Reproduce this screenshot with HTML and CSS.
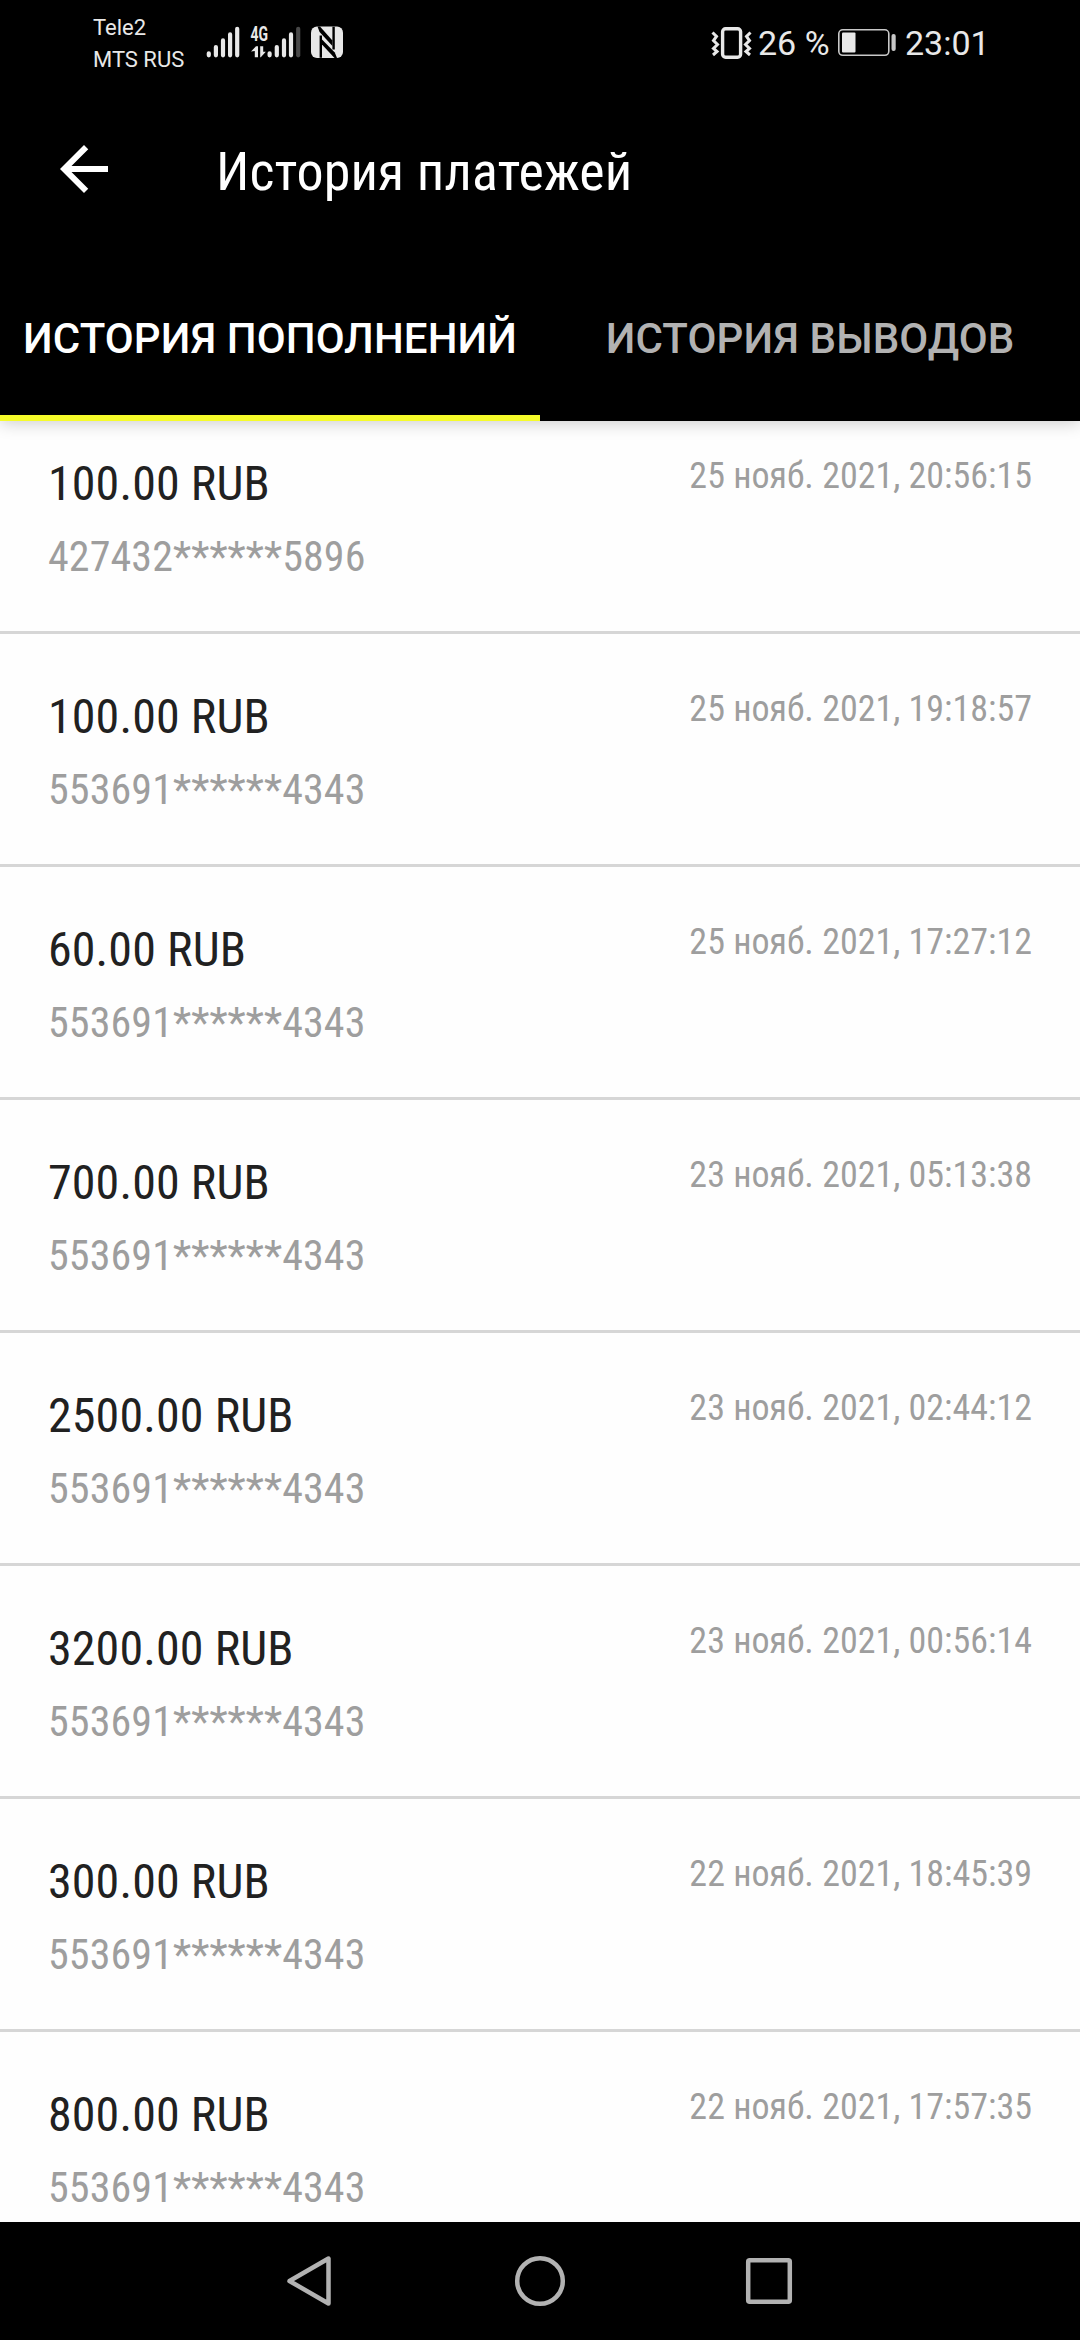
FILE: index.html
```html
<!DOCTYPE html>
<html lang="ru">
<head>
  <meta charset="UTF-8">
  <meta name="viewport" content="width=device-width, initial-scale=1.0">
  <title>История платежей</title>
  <link rel="stylesheet" href="styles.css">
</head>
<body>
  <div class="status-bar">
    <div class="carriers">
      <div>Tele2</div>
      <div>MTS RUS</div>
    </div>
    <svg class="signal-icons" width="140" height="40" viewBox="205 22 140 40">
      <!-- SIM 1 -->
      <g stroke="#e8e8e8" stroke-width="4.2" stroke-linecap="round">
        <path d="M208.8 53.3v2M215.9 47.1v8.2M223 40.4v14.9M230.1 34.4v20.9M237.2 28.8v26.5"/>
        <!-- SIM 2 -->
        <path d="M269.6 53.3v2M276.8 47.1v8.2M284 40.4v14.9M291 34.4v20.9"/>
        <path d="M298.2 28.8v26.5" stroke="#484848"/>
      </g>
      <text class="net" x="250.5" y="41" textLength="17.5" lengthAdjust="spacingAndGlyphs">4G</text>
      <path d="M251 51.5l5-5.3h2v11h-3.2v-6.2zM260.2 46.2h3v5.5h2.6l-5 5.5h-.6z" fill="#e8e8e8"/>
      <!-- NFC -->
      <rect x="311" y="26.5" width="32" height="31.5" rx="6" fill="#e8e8e8"/>
      <path d="M320.800 57.800V35.500M333.600 26.700V49.500" stroke="#000" stroke-width="2.4"/>
      <path d="M317.500 26.500h2.500L332.400 40.500v5.500L319.600 32z" fill="#000"/>
      <path d="M322 39.500L334.800 52.500l2.200 5.500h-2.500L322 44.500z" fill="#000"/>
    </svg>
    <div class="status-right">
      <svg width="42" height="36" viewBox="711 24 42 36" fill="none" stroke="#e8e8e8">
        <rect x="722.6" y="27.8" width="18" height="28.4" rx="3" stroke-width="3.4"/>
        <path d="M712.5 31.5l4 4-3 4 4 4-4 4 3.5 3-4 3.5M750.5 31.5l-4 4 3 4-4 4 4 4-3.5 3 4 3.5" stroke-width="3"/>
      </svg>
      <span class="percent">26 %</span>
      <svg class="battery" width="60" height="30" viewBox="836 28 60 30">
        <rect x="837.8" y="29.8" width="50" height="25.5" rx="4" fill="none" stroke="#c8c8c8" stroke-width="1.6"/>
        <rect x="841" y="32.5" width="13.5" height="20" rx="1" fill="#e8e8e8"/>
        <rect x="890.5" y="34" width="4.2" height="17" rx="2" fill="#c8c8c8"/>
      </svg>
      <span class="clock">23:01</span>
    </div>
  </div>

  <header class="toolbar">
    <svg class="back" width="72" height="72" viewBox="0 0 24 24" fill="#fff">
      <path d="M20 11H7.83l5.59-5.59L12 4l-8 8 8 8 1.41-1.41L7.83 13H20v-2z"/>
    </svg>
    <h1>История платежей</h1>
  </header>

  <div class="tabs">
    <div class="tab active">ИСТОРИЯ ПОПОЛНЕНИЙ</div>
    <div class="tab">ИСТОРИЯ ВЫВОДОВ</div>
  </div>

  <div class="list">
    <div class="row">
      <div class="info"><div class="amount">100.00 RUB</div><div class="card">427432******5896</div></div>
      <div class="date">25 нояб. 2021, 20:56:15</div>
    </div>
    <div class="row">
      <div class="info"><div class="amount">100.00 RUB</div><div class="card">553691******4343</div></div>
      <div class="date">25 нояб. 2021, 19:18:57</div>
    </div>
    <div class="row">
      <div class="info"><div class="amount">60.00 RUB</div><div class="card">553691******4343</div></div>
      <div class="date">25 нояб. 2021, 17:27:12</div>
    </div>
    <div class="row">
      <div class="info"><div class="amount">700.00 RUB</div><div class="card">553691******4343</div></div>
      <div class="date">23 нояб. 2021, 05:13:38</div>
    </div>
    <div class="row">
      <div class="info"><div class="amount">2500.00 RUB</div><div class="card">553691******4343</div></div>
      <div class="date">23 нояб. 2021, 02:44:12</div>
    </div>
    <div class="row">
      <div class="info"><div class="amount">3200.00 RUB</div><div class="card">553691******4343</div></div>
      <div class="date">23 нояб. 2021, 00:56:14</div>
    </div>
    <div class="row">
      <div class="info"><div class="amount">300.00 RUB</div><div class="card">553691******4343</div></div>
      <div class="date">22 нояб. 2021, 18:45:39</div>
    </div>
    <div class="row">
      <div class="info"><div class="amount">800.00 RUB</div><div class="card">553691******4343</div></div>
      <div class="date">22 нояб. 2021, 17:57:35</div>
    </div>
  </div>

  <div class="nav-bar">
    <svg width="54" height="54" viewBox="0 0 54 54"><path d="M44.5 4.5v45L5.500 27z"/></svg>
    <svg width="54" height="54" viewBox="0 0 54 54"><circle cx="27" cy="27" r="22.8"/></svg>
    <svg width="54" height="54" viewBox="0 0 54 54"><rect x="6.2" y="6.2" width="41.6" height="41.6" rx="1.5"/></svg>
  </div>
</body>
</html>
```

FILE: styles.css
```css
* {
  box-sizing: border-box;
}

body {
  display: flex;
  flex-direction: column;
  height: 2340px;
  margin: 0;
  overflow: hidden;
  background: #fefefe;
  font-family: "Roboto Condensed", Roboto, sans-serif;
  font-stretch: 75%;
}

.status-bar {
  display: flex;
  height: 84px;
  padding-left: 93px;
  background: #000;
  color: #e8e8e8;
  font-family: Roboto, sans-serif;
  font-stretch: 100%;
}

.carriers {
  width: 112px;
  padding-top: 12px;
  font-size: 22px;
  line-height: 32px;
  white-space: nowrap;
}

.signal-icons {
  margin-top: 22px;
}

.net {
  font-size: 20px;
  font-weight: 700;
  fill: #e8e8e8;
}

.status-right {
  display: flex;
  align-items: center;
  height: 86px;
  margin-left: 366px;
  font-size: 34px;
}

.percent {
  width: 78px;
  margin-left: 5px;
  white-space: nowrap;
}

.battery {
  margin-left: 1px;
}

.clock {
  margin-left: 8px;
}

.toolbar {
  display: flex;
  align-items: center;
  height: 170px;
  padding-left: 48px;
  background: #000;
  color: #fff;
}

.toolbar h1 {
  margin: 4px 0 0 96px;
  font-size: 54px;
  font-weight: 400;
  letter-spacing: 0.1px;
}

.tabs {
  display: flex;
  flex-shrink: 0;
  height: 167px;
  background: #000;
  box-shadow: 0 2px 16px rgba(0, 0, 0, 0.2);
  z-index: 1;
}

.tab {
  flex: 1;
  padding-top: 60px;
  color: #b2b2b2;
  font-family: Roboto, sans-serif;
  font-size: 42px;
  font-stretch: 100%;
  font-weight: 500;
  letter-spacing: 0.1px;
  line-height: 50px;
  text-align: center;
  white-space: nowrap;
}

.tab.active {
  border-bottom: 6px solid #f6fc2a;
  color: #fff;
}

.list {
  flex: 1;
  min-height: 0;
  overflow: hidden;
}

.row {
  display: flex;
  justify-content: space-between;
  height: 233px;
  padding: 54px 48px 0;
  border-bottom: 3px solid #d6d6d6;
}

.row:first-child {
  height: 213px;
  padding-top: 34px;
}

.amount {
  padding-top: 1px;
  color: #212121;
  font-size: 48px;
  letter-spacing: 0.1px;
  line-height: 56px;
}

.card {
  margin-top: 20px;
  color: #9e9e9e;
  font-size: 42px;
  letter-spacing: 0.1px;
  line-height: 50px;
}

.date {
  color: #9e9e9e;
  font-size: 36px;
  line-height: 42px;
}

.nav-bar {
  display: flex;
  flex-shrink: 0;
  align-items: center;
  justify-content: space-between;
  height: 118px;
  padding: 0 284px;
  background: #000;
}

.nav-bar svg {
  fill: none;
  stroke: #b2b2b2;
  stroke-width: 4.5;
  stroke-linejoin: round;
}
```
